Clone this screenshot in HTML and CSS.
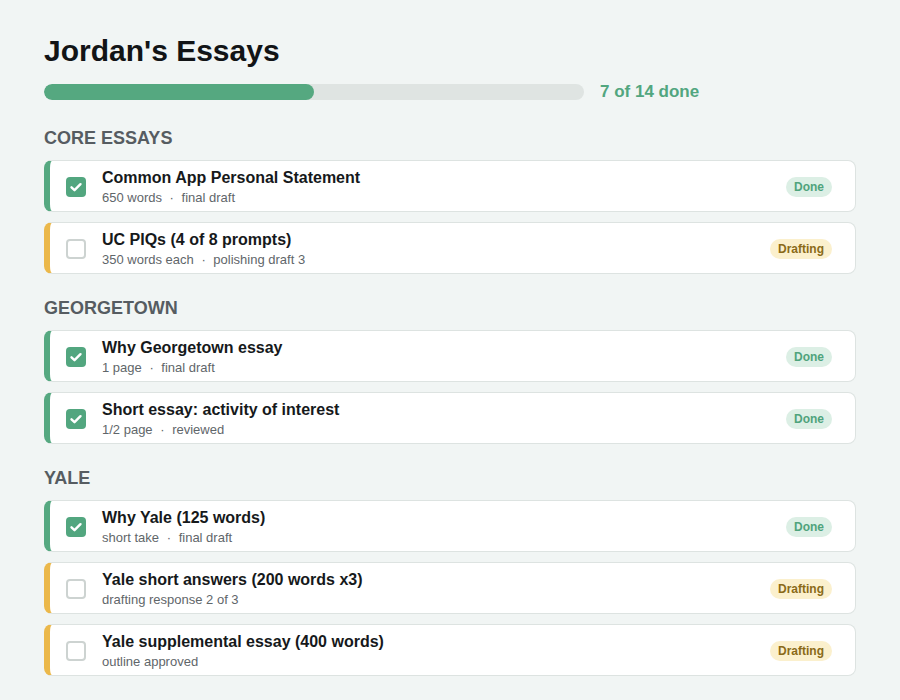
FILE: index.html
```html
<!DOCTYPE html>
<html lang="en">
<head>
<meta charset="utf-8">
<title>Jordan's Essays</title>
<link rel="stylesheet" href="styles.css">
</head>
<body>
<main class="page">
  <h1 class="title">Jordan's Essays</h1>
  <div class="progress">
    <div class="bar"><div class="fill" style="width:50%"></div></div>
    <span class="progress-label">7 of 14 done</span>
  </div>

  <section class="group">
    <h2 class="group-title">CORE ESSAYS</h2>
    <ul class="list">
      <li class="card done">
        <span class="check checked"><svg viewBox="0 0 20 20" width="20" height="20"><path d="M5.5 10.3l3 2.9 6-6" fill="none" stroke="#fff" stroke-width="2.4" stroke-linecap="round" stroke-linejoin="round"/></svg></span>
        <div class="info"><div class="name">Common App Personal Statement</div><div class="meta">650 words <span class="dot">·</span> final draft</div></div>
        <span class="badge badge-done">Done</span>
      </li>
      <li class="card drafting">
        <span class="check"></span>
        <div class="info"><div class="name">UC PIQs (4 of 8 prompts)</div><div class="meta">350 words each <span class="dot">·</span> polishing draft 3</div></div>
        <span class="badge badge-drafting">Drafting</span>
      </li>
    </ul>
  </section>

  <section class="group">
    <h2 class="group-title">GEORGETOWN</h2>
    <ul class="list">
      <li class="card done">
        <span class="check checked"><svg viewBox="0 0 20 20" width="20" height="20"><path d="M5.5 10.3l3 2.9 6-6" fill="none" stroke="#fff" stroke-width="2.4" stroke-linecap="round" stroke-linejoin="round"/></svg></span>
        <div class="info"><div class="name">Why Georgetown essay</div><div class="meta">1 page <span class="dot">·</span> final draft</div></div>
        <span class="badge badge-done">Done</span>
      </li>
      <li class="card done">
        <span class="check checked"><svg viewBox="0 0 20 20" width="20" height="20"><path d="M5.5 10.3l3 2.9 6-6" fill="none" stroke="#fff" stroke-width="2.4" stroke-linecap="round" stroke-linejoin="round"/></svg></span>
        <div class="info"><div class="name">Short essay: activity of interest</div><div class="meta">1/2 page <span class="dot">·</span> reviewed</div></div>
        <span class="badge badge-done">Done</span>
      </li>
    </ul>
  </section>

  <section class="group">
    <h2 class="group-title">YALE</h2>
    <ul class="list">
      <li class="card done">
        <span class="check checked"><svg viewBox="0 0 20 20" width="20" height="20"><path d="M5.5 10.3l3 2.9 6-6" fill="none" stroke="#fff" stroke-width="2.4" stroke-linecap="round" stroke-linejoin="round"/></svg></span>
        <div class="info"><div class="name">Why Yale (125 words)</div><div class="meta">short take <span class="dot">·</span> final draft</div></div>
        <span class="badge badge-done">Done</span>
      </li>
      <li class="card drafting">
        <span class="check"></span>
        <div class="info"><div class="name">Yale short answers (200 words x3)</div><div class="meta">drafting response 2 of 3</div></div>
        <span class="badge badge-drafting">Drafting</span>
      </li>
      <li class="card drafting">
        <span class="check"></span>
        <div class="info"><div class="name">Yale supplemental essay (400 words)</div><div class="meta">outline approved</div></div>
        <span class="badge badge-drafting">Drafting</span>
      </li>
    </ul>
  </section>
</main>
</body>
</html>
```

FILE: styles.css
```css
* { box-sizing: border-box; }
html, body { margin: 0; padding: 0; }
body {
  background: #f1f5f4;
  font-family: "Liberation Sans", Arial, sans-serif;
  color: #16191b;
}
.page {
  padding: 31px 44px 20px 44px;
}
.title {
  margin: 0;
  font-size: 30px;
  line-height: 40px;
  font-weight: 700;
  color: #121416;
}
.progress {
  display: flex;
  align-items: center;
  gap: 16px;
  margin-top: 11px;
}
.bar {
  width: 540px;
  height: 16px;
  border-radius: 8px;
  background: #dfe4e2;
  overflow: hidden;
}
.fill {
  height: 100%;
  background: #55a880;
  border-radius: 8px;
}
.progress-label {
  font-size: 17px;
  line-height: 20px;
  font-weight: 700;
  color: #52a67f;
}
.group { margin-top: 22px; }
.group:first-of-type { margin-top: 24px; }
.group-title {
  margin: 0 0 10px 0;
  font-size: 18px;
  line-height: 24px;
  font-weight: 700;
  color: #565c61;
}
.list {
  list-style: none;
  margin: 0;
  padding: 0;
  display: flex;
  flex-direction: column;
  gap: 10px;
}
.card {
  display: flex;
  align-items: center;
  height: 52px;
  background: #fff;
  border: 1px solid #dde3e1;
  border-left: 6px solid #55a880;
  border-radius: 8px;
  padding: 1px 23px 0 16px;
}
.card.drafting { border-left-color: #ebb84a; }
.check {
  flex: none;
  width: 20px;
  height: 20px;
  border-radius: 4px;
  border: 2px solid #cdd3d1;
  background: #fff;
  margin-right: 16px;
  display: flex;
}
.check.checked {
  border: none;
  background: #52a67f;
}
.info { flex: 1; min-width: 0; }
.name {
  font-size: 16px;
  line-height: 20px;
  font-weight: 700;
  color: #16191b;
}
.meta {
  font-size: 13px;
  line-height: 17px;
  color: #5f666a;
  margin-top: 1px;
}
.dot { margin: 0 4px; }
.badge {
  flex: none;
  font-size: 12px;
  font-weight: 700;
  line-height: 20px;
  padding: 0 8px;
  border-radius: 10px;
}
.badge-done { background: #dcefe5; color: #4fa37c; }
.badge-drafting { background: #fbf0cd; color: #8a6a18; }
```
